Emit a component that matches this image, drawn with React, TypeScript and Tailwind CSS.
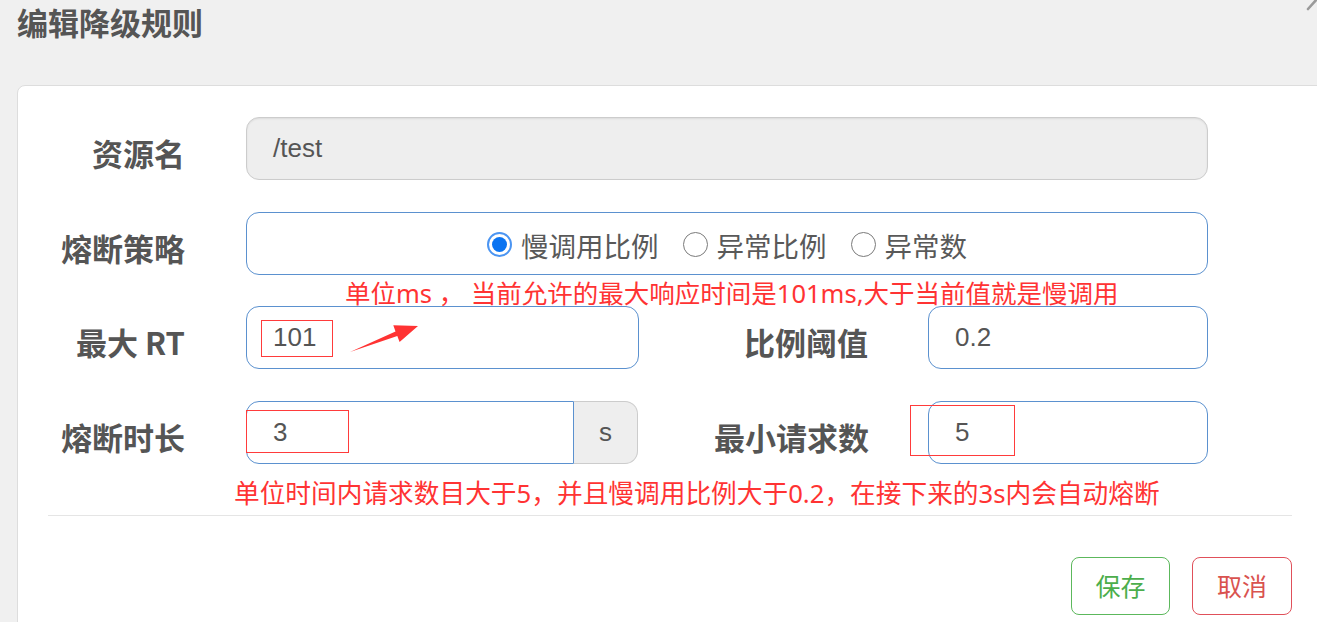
import React from 'react';

const sans = { fontFamily: '"Liberation Sans", "Noto Sans CJK SC", sans-serif' };

const Label: React.FC<{ text: string; width: string }> = ({ text, width }) => (
  <div className={`${width} shrink-0 pt-[9px] text-right text-[31px] font-bold leading-[36px] text-[#555]`}>{text}</div>
);

const Radio: React.FC<{ label: string; checked?: boolean }> = ({ label, checked }) => (
  <label className="flex items-center gap-[9px]">
    {checked ? (
      <span className="flex h-[25px] w-[25px] items-center justify-center rounded-full border-2 border-[#4b95f2] bg-white">
        <span className="h-[15px] w-[15px] rounded-full bg-[#0b74f1]" />
      </span>
    ) : (
      <span className="h-[25px] w-[25px] rounded-full border-[1.5px] border-[#7a7a7a] bg-white" />
    )}
    <span className="text-[27.5px] leading-[36px] text-[#595959]" style={{ fontFamily: '"Noto Sans CJK SC", sans-serif' }}>
      {label}
    </span>
  </label>
);

const TextBox: React.FC<{ value: string; width: string }> = ({ value, width }) => (
  <div
    className={`${width} flex h-[63px] shrink-0 items-center rounded-[13px] border border-[#5b91cf] bg-white pl-[26px] text-[26px] text-[#555]`}
    style={sans}
  >
    {value}
  </div>
);

export default function App() {
  return (
    <div
      className="relative h-[622px] w-full overflow-hidden bg-[#f0f0f0]"
      style={{ fontFamily: '"Noto Sans CJK SC", sans-serif' }}
    >
      {/* close button, mostly off screen */}
      <svg className="absolute right-0 top-0 h-[12px] w-[14px]" viewBox="0 0 14 12">
        <line x1="14" y1="-1" x2="5" y2="9" stroke="#9a9a9a" strokeWidth="2.6" strokeLinecap="round" />
      </svg>

      <h1 className="pl-[17px] pt-[6px] text-[31px] font-bold leading-[32px] text-[#555]">编辑降级规则</h1>

      <div className="ml-[17px] mt-[47px] w-[1306px] rounded-tl-[8px] border border-[#dddddd] bg-white pb-[20px] pt-[31px]">
        {/* 资源名 */}
        <div className="flex items-center">
          <Label text="资源名" width="w-[167px]" />
          <div
            className="ml-[61px] flex h-[63px] w-[962px] items-center rounded-[13px] border border-[#cccccc] bg-[#eeeeee] pl-[26px] text-[26px] text-[#555] shadow-[inset_0_1px_2px_rgba(0,0,0,0.08)]"
            style={sans}
          >
            /test
          </div>
        </div>

        {/* 熔断策略 */}
        <div className="mt-[32px] flex items-center">
          <Label text="熔断策略" width="w-[167px]" />
          <div className="ml-[61px] flex h-[63px] w-[962px] items-center justify-center gap-[24px] rounded-[13px] border border-[#5b91cf] bg-white pt-[2px]">
            <Radio label="慢调用比例" checked />
            <Radio label="异常比例" />
            <Radio label="异常数" />
          </div>
        </div>

        {/* 最大 RT / 比例阈值 */}
        <div className="mt-[31px] flex items-center">
          <Label text="最大 RT" width="w-[167px]" />
          <div className="ml-[61px]">
            <TextBox value="101" width="w-[393px]" />
          </div>
          <Label text="比例阈值" width="w-[229px]" />
          <div className="ml-[60px]">
            <TextBox value="0.2" width="w-[280px]" />
          </div>
        </div>

        {/* 熔断时长 / 最小请求数 */}
        <div className="mt-[32px] flex items-center">
          <Label text="熔断时长" width="w-[167px]" />
          <div className="ml-[61px] flex h-[63px] w-[392px] shrink-0">
            <div
              className="flex h-full w-[328px] items-center rounded-l-[13px] border border-[#5b91cf] bg-white pl-[26px] text-[26px] text-[#555]"
              style={sans}
            >
              3
            </div>
            <div
              className="flex h-full w-[64px] items-center justify-center rounded-r-[13px] border border-l-0 border-[#cccccc] bg-[#eeeeee] text-[26px] text-[#555]"
              style={sans}
            >
              s
            </div>
          </div>
          <Label text="最小请求数" width="w-[231px]" />
          <div className="ml-[59px]">
            <TextBox value="5" width="w-[280px]" />
          </div>
        </div>

        <div className="ml-[30px] mt-[51px] h-px w-[1244px] bg-[#e5e5e5]" />

        <div className="ml-[30px] mt-[41px] flex w-[1244px] justify-end gap-[22px]">
          <button className="h-[58px] w-[99px] rounded-[8px] border border-[#5cb85c] bg-white text-[25px] text-[#4cae4c]">
            保存
          </button>
          <button className="h-[58px] w-[100px] rounded-[8px] border border-[#e0505a] bg-white text-[25px] text-[#d9534f]">
            取消
          </button>
        </div>
      </div>

      {/* red annotations drawn over the screenshot */}
      <div
        className="absolute left-[345px] top-[278px] whitespace-nowrap text-[25.5px] leading-[30px] text-[#f33]"
        style={{ fontFamily: '"Noto Sans", "Noto Sans CJK SC", sans-serif' }}
      >
        单位ms ， 当前允许的最大响应时间是101ms,大于当前值就是慢调用
      </div>
      <div
        className="absolute left-[234px] top-[479px] whitespace-nowrap text-[25.7px] leading-[30px] text-[#f33]"
        style={{ fontFamily: '"Noto Sans", "Noto Sans CJK SC", sans-serif' }}
      >
        单位时间内请求数目大于5，并且慢调用比例大于0.2，在接下来的3s内会自动熔断
      </div>
      <div className="absolute left-[261px] top-[320px] h-[37px] w-[72px] border border-[#ff3b3b]" />
      <div className="absolute left-[246px] top-[410px] h-[43px] w-[103px] border border-[#ff3b3b]" />
      <div className="absolute left-[910px] top-[405px] h-[51px] w-[105px] border border-[#ff3b3b]" />
      <svg className="absolute left-[350px] top-[324px] h-[30px] w-[70px]" viewBox="0 -2 70 30">
        <polygon
          points="0,26 47.3,10 49.6,16.1 68,0 43.3,-0.7 45.5,5.4"
          fill="#f33"
        />
      </svg>
    </div>
  );
}
